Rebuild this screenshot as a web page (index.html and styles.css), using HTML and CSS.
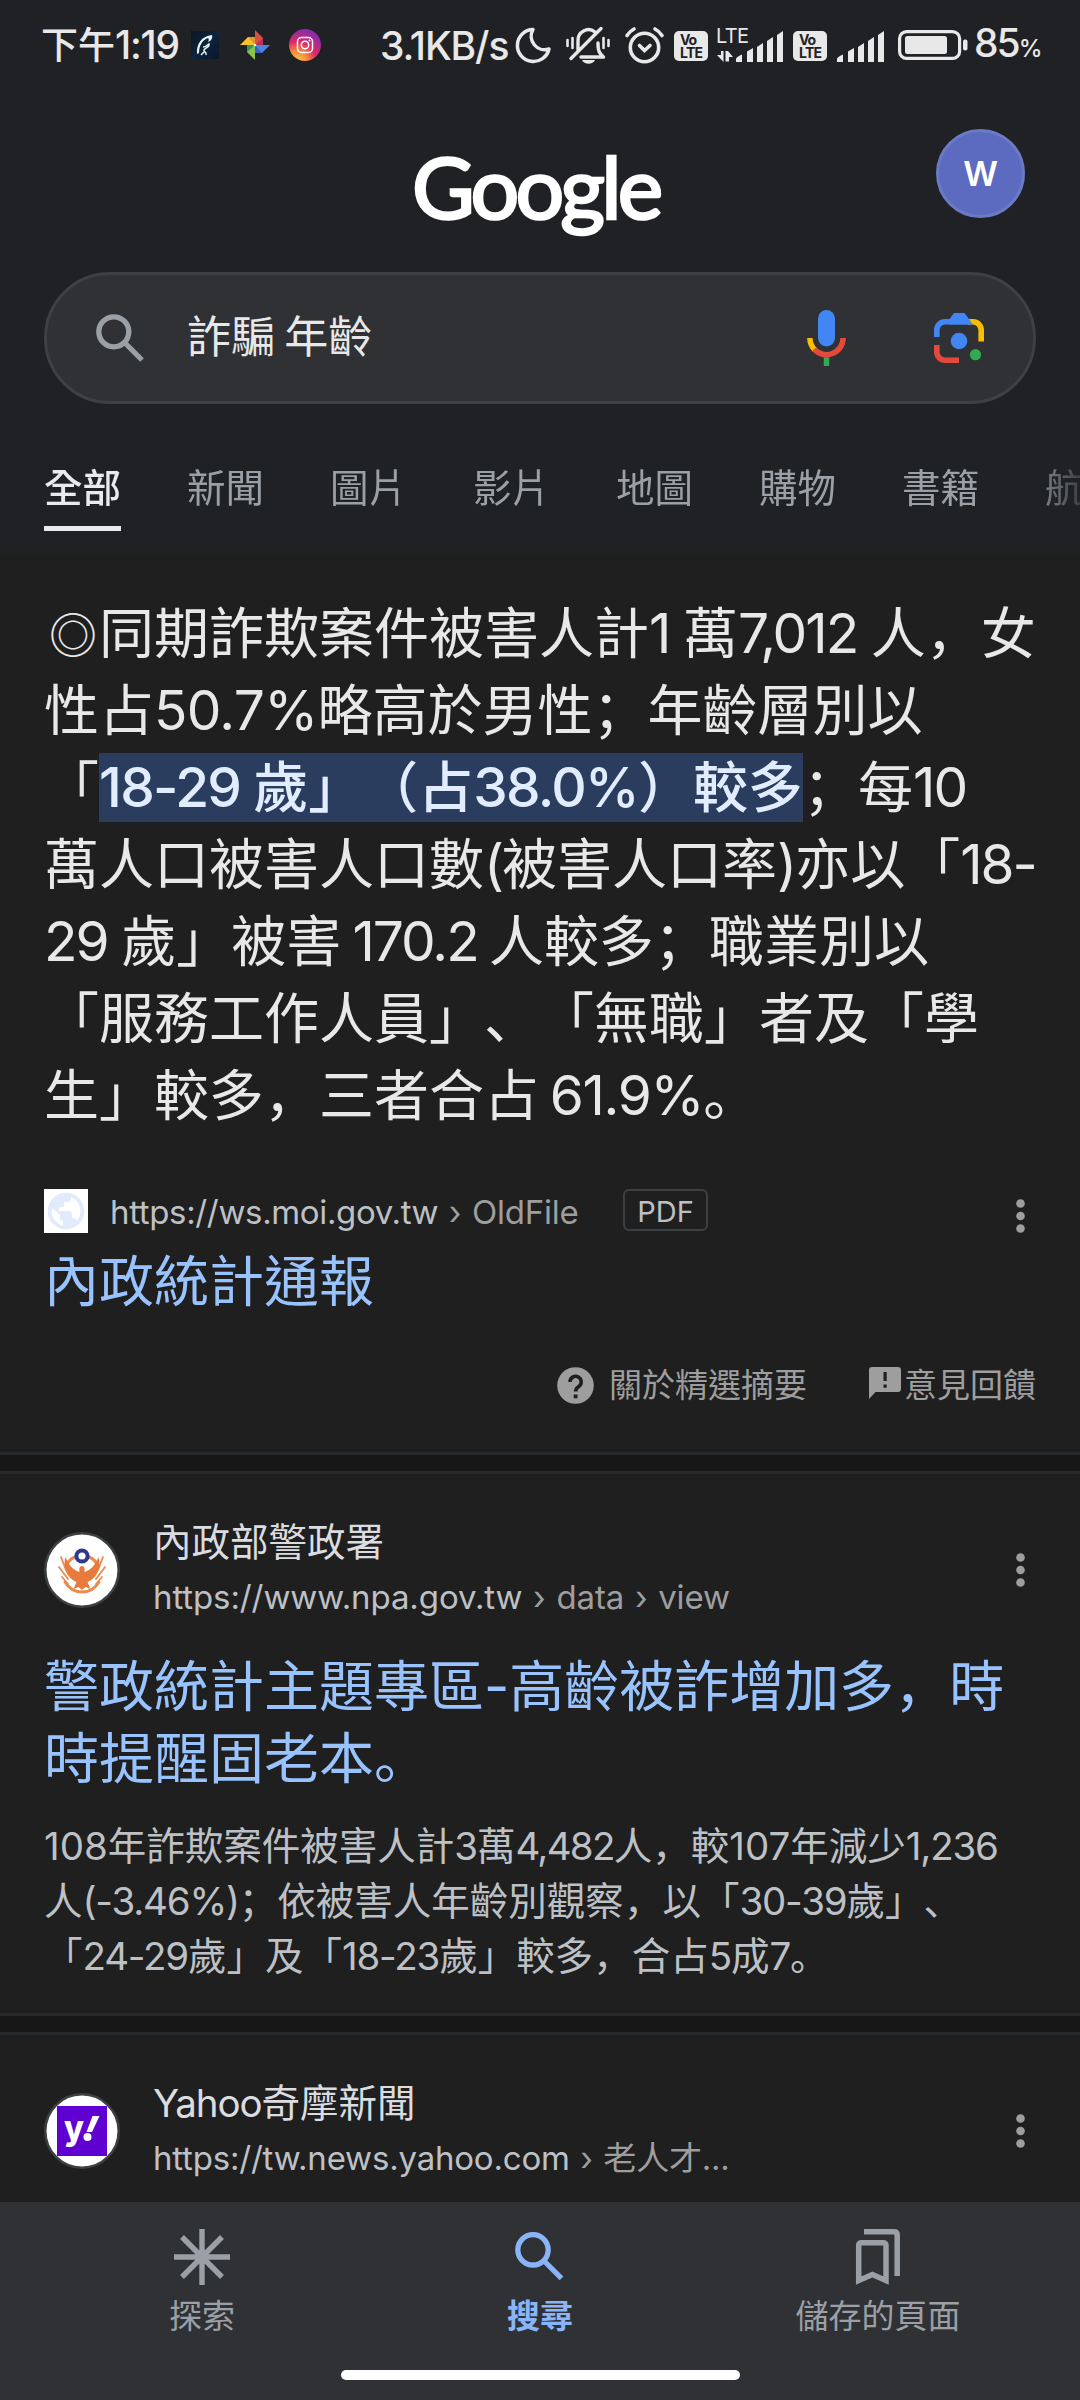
FILE: index.html
```html
<!DOCTYPE html>
<html lang="zh-Hant">
<head>
<meta charset="utf-8">
<title>詐騙 年齡 - Google</title>
<link rel="stylesheet" href="styles.css">
</head>
<body>
<div class="screen">
  <header class="header">
    <div class="status">
      <span class="time">下午<span class="clock">1:19</span></span>
      <svg width="28" height="28" viewBox="0 0 28 28"><defs><linearGradient id="sea" x1="0" y1="0" x2="1" y2="1"><stop offset="0" stop-color="#0a1420"/><stop offset=".5" stop-color="#0d2440"/><stop offset="1" stop-color="#0a1626"/></linearGradient></defs><rect width="28" height="28" fill="url(#sea)"/><path d="M6 23C5 14 10 5 21 4c1 3-1 6-4 7 1-2 1-3 0-4C11 9 8 15 8 22z" fill="#e8f3f4"/><path d="M12 16c3 0 4-2 6-3 1 3-4 4-5 6s3 1 2 5M10 24l3-3" stroke="#e8f3f4" stroke-width="1.500" fill="none"/></svg>
      <svg width="30" height="30" viewBox="0 0 30 30"><path d="M15 0v15h8V8z" fill="#d95040"/><path d="M15 15h8V8z" fill="#b8325a"/><path d="M30 15H15v8h7z" fill="#4a86ea"/><path d="M15 15v8h7z" fill="#3a62c4"/><path d="M15 30V15H7v7z" fill="#8bc34a"/><path d="M15 15H7v7z" fill="#2f9a50"/><path d="M0 15h15V7H8z" fill="#f6c12c"/><path d="M15 15V7H8z" fill="#e8962c"/><circle cx="15" cy="15" r="1.3" fill="#fff"/></svg>
      <svg width="32" height="32" viewBox="0 0 32 32"><defs><radialGradient id="ig" cx=".25" cy="1" r="1"><stop offset="0" stop-color="#ffc14a"/><stop offset=".3" stop-color="#f8923c"/><stop offset=".6" stop-color="#dd2a67"/><stop offset="1" stop-color="#8a2bab"/></radialGradient></defs><circle cx="16" cy="16" r="16" fill="url(#ig)"/><g fill="none" stroke="#fff" stroke-width="1.5"><rect x="8.5" y="8.5" width="15" height="15" rx="4"/><circle cx="16" cy="16" r="3.7"/></g><circle cx="20.5" cy="11.5" r="1" fill="#fff"/></svg>
      <span class="speed">3.1KB/s</span>
      <svg width="35" height="36" viewBox="0 0 35 36"><path d="M17 2.5A16 16 0 1 0 33 22 13.500 13.500 0 0 1 17 2.500z" fill="none" stroke="#e8e8e8" stroke-width="3.500" stroke-linejoin="round"/></svg>
      <svg width="44" height="39" viewBox="0 0 44 39"><g fill="none" stroke="#e8e8e8" stroke-width="3.400" stroke-linecap="round" stroke-linejoin="round"><path d="M12 24V15a10.500 10.500 0 0 1 17-9M32 17c0 8 1 10 5.500 14H15M5 32.500 35 2.500"/><path d="M1.500 14v6M6.500 12v10M37.500 12v10M42.500 14v6" stroke-width="2.600"/></g><path d="M16 34h13c-2 5-11 5-13 0z" fill="#e8e8e8"/></svg>
      <svg width="39" height="37" viewBox="0 0 39 37"><g fill="none" stroke="#e8e8e8" stroke-width="3.600" stroke-linecap="round"><circle cx="19.500" cy="20.500" r="14.200"/><path d="M2 8.500C4 5.500 6 3.500 9 2M37 8.500C35 5.500 33 3.500 30 2M14.500 18.500l5 5 5.500-5"/></g></svg>
      <svg class="low" width="34" height="30" viewBox="0 0 34 30"><rect width="34" height="30" rx="5" fill="#e8e8e8"/><g class="volte"><text x="6" y="13.500" textLength="17">Vo</text><text x="6" y="26.500" textLength="23">LTE</text></g></svg>
      <svg width="68" height="36" viewBox="0 0 68 36"><text class="lte" x="-1" y="15.500" textLength="33">LTE</text><path d="M0 28h4v-4h2.500v11zM8.500 24h2.500l5 6h-4v4.500H8.500z" fill="#e8e8e8"/><path d="M19 35v-3q0-2 6-4.500v7.500zM30 35V24.500l6-3.500v14zM40 35V20l6-4v19zM50 35V14l6-4v25zM60 35V8l6-4v31z" fill="#e8e8e8"/></svg>
      <svg class="low" width="34" height="30" viewBox="0 0 34 30"><rect width="34" height="30" rx="5" fill="#e8e8e8"/><g class="volte"><text x="6" y="13.500" textLength="17">Vo</text><text x="6" y="26.500" textLength="23">LTE</text></g></svg>
      <svg width="49" height="36" viewBox="18 0 49 36"><path d="M19 35v-3q0-2 6-4.500v7.500zM30 35V24.500l6-3.500v14zM40 35V20l6-4v19zM50 35V14l6-4v25zM60 35V8l6-4v31z" fill="#e8e8e8"/></svg>
      <svg width="70" height="30" viewBox="0 0 70 30"><rect x="1.600" y="1.600" width="60" height="26.800" rx="7" fill="none" stroke="#e8e8e8" stroke-width="3.200"/><rect x="7" y="6" width="42" height="18" rx="2.500" fill="#e8e8e8"/><rect x="65" y="9.500" width="4.500" height="11" rx="2" fill="#e8e8e8"/></svg>
      <span class="battery">85<small>%</small></span>
    </div>

    <div class="brand">
      <span class="logo">Google</span>
      <span class="account">W</span>
    </div>

    <div class="searchbar">
      <svg class="lookup" width="48" height="48" viewBox="0 0 48 48" fill="none" stroke="#9aa0a6" stroke-width="5.300"><circle cx="17.800" cy="17.800" r="15"/><path d="M28.500 28.500 46 46"/></svg>
      <span class="query">詐騙 年齡</span>
      <svg class="mic" width="39" height="56" viewBox="0 0 39 56"><rect x="11" width="17" height="36.500" rx="8.500" fill="#4285f4"/><g fill="none" stroke-width="5.500"><path d="M2.900 28A16.600 16.600 0 0 0 7.700 39.700" stroke="#fbbc04"/><path d="M7.200 39.200A16.600 16.600 0 0 0 36.100 28" stroke="#e34a3c"/><path d="M19.500 47.300V56" stroke="#34a853"/></g></svg>
      <svg width="50" height="50" viewBox="0 0 50 50"><g fill="none" stroke-width="5.600"><path d="M2.800 24V17A8.200 8.200 0 0 1 11 8.800H35" stroke="#4285f4"/><path d="M34 8.800h5A8.200 8.200 0 0 1 47.200 17V28.500" stroke="#fbbc04"/><path d="M2.800 32V39A8.200 8.200 0 0 0 11 47.200H25" stroke="#e34a3c"/></g><path d="M15.500 6 20 0H30.500L39 11.500H15.500z" fill="#4285f4"/><circle cx="25" cy="28" r="8.300" fill="#4285f4"/><circle cx="41.500" cy="41.700" r="5.600" fill="#34a853"/></svg>
    </div>

    <nav class="tabs">
      <span class="tab active">全部</span><span class="tab">新聞</span><span class="tab">圖片</span><span class="tab">影片</span><span class="tab">地圖</span><span class="tab">購物</span><span class="tab">書籍</span><span class="tab">航</span>
    </nav>
  </header>

  <section class="featured">
    <p class="answer">
      <span class="line"><i class="bullet">◎</i>同期詐欺案件被害人計<b>1 </b>萬<b>7,012 </b>人<i>，</i>女</span>
      <span class="line">性占<b class="loose">50.7%</b>略高於男性<i>；</i>年齡層別以</span>
      <span class="line">「<mark><b>18-29 </b>歲」（占<b>38.0%</b>）較多</mark><i>；</i>每<b>10</b></span>
      <span class="line">萬人口被害人口數<b>(</b>被害人口率<b>)</b>亦以「<b>18-</b></span>
      <span class="line"><b>29 </b>歲」被害<b class="snug"> 170.2 </b>人較多<i>；</i>職業別以</span>
      <span class="line">「服務工作人員」<i>、</i>「無職」者及「學</span>
      <span class="line">生」較多<i>，</i>三者合占<b class="share"> 61.9%</b><i>。</i></span>
    </p>
    <div class="source">
      <svg class="favicon" width="44" height="44" viewBox="0 0 44 44"><rect width="44" height="44" fill="#fff"/><circle cx="22" cy="22" r="18.300" fill="#e1ebfb"/><path d="M8 19 16 26v3q0 3 3 3v4.700A15 15 0 0 1 8 19zM27 8v1.500q0 3.500-3.500 3.500H20v3.500q0 1.800-1.800 1.800H15v3.700h11q1.800 0 1.800 1.800V29h2q2.500 0 3.300 2.500A15 15 0 0 0 27 8z" fill="#fff"/></svg>
      <span class="crumbs url"><em>https://ws.moi.gov.tw</em> › OldFile</span>
      <span class="badge">PDF</span>
      <svg class="more" width="9" height="34" viewBox="0 0 9 34"><circle cx="4.500" cy="4.500" r="4.300"/><circle cx="4.500" cy="17" r="4.300"/><circle cx="4.500" cy="29.500" r="4.300"/></svg>
    </div>
    <h3 class="title">內政統計通報</h3>
    <div class="feedback">
      <svg class="help" width="37" height="37" viewBox="0 0 37 37"><circle cx="18.500" cy="18.500" r="18.300" fill="#9e9e9e"/><path d="M13 15a5.600 5.600 0 1 1 8.500 4.700C19.500 21 18.600 22 18.600 24.500" fill="none" stroke="#1f1f1f" stroke-width="3.600"/><rect x="16.700" y="27.500" width="3.800" height="3.800" fill="#1f1f1f"/></svg>
      <span>關於精選摘要</span>
      <svg class="note" width="32" height="32" viewBox="0 0 32 32"><path d="M3 0H29a3 3 0 0 1 3 3V22a3 3 0 0 1-3 3H6.500L0 32V3A3 3 0 0 1 3 0z" fill="#9e9e9e"/><path d="M14.500 5h3.200v9h-3.200zM14.500 17.500h3.200v3.200h-3.200z" fill="#1f1f1f"/></svg>
      <span>意見回饋</span>
    </div>
  </section>

  <div class="divider"></div>

  <section class="result">
    <div class="site">
      <svg class="emblem" width="76" height="76" viewBox="0 0 76 76"><circle cx="38" cy="38" r="36.700" fill="#fff" stroke="#3c4043" stroke-width="2.500"/><g fill="none" stroke="#ea8a50" stroke-linecap="round"><path d="M31 25Q25 27 22 34M45 25Q51 27 54 34M21 50Q27 60 38 60T55 50" stroke-width="3"/><path d="M17 25 22 38M59 25 54 38M15 35 24 47M61 35 52 47M18 45 24 52M58 45 52 52" stroke-width="1.800"/></g><path d="M38 34c2.500 0 3 3 2.500 6 7-2 11-8 14-15 3 10-1 21-11 25l3 7-5-2-3.500 3-3.500-3-5 2 3-7C22.500 46 18.500 35 21.500 25c3 7 7 13 14 15-.5-3 0-6 2.500-6z" fill="#e87b3c"/><circle cx="38" cy="24" r="5.600" fill="#fff" stroke="#2b3a8f" stroke-width="4"/></svg>
      <div class="meta"><span class="name">內政部警政署</span><span class="url wide"><em>https://www.npa.gov.tw</em> › data › view</span></div>
      <svg class="more" width="9" height="34" viewBox="0 0 9 34"><circle cx="4.500" cy="4.500" r="4.300"/><circle cx="4.500" cy="17" r="4.300"/><circle cx="4.500" cy="29.500" r="4.300"/></svg>
    </div>
    <h3 class="title"><span class="line">警政統計主題專區-高齡被詐增加多<i>，</i>時</span><span class="line">時提醒固老本<i>。</i></span></h3>
    <p class="snippet">
      <span class="line"><b class="loose">108</b>年詐欺案件被害人計<b>3</b>萬<b class="tight">4,482</b>人<i>，</i>較<b class="loose">107</b>年減少<b>1,236</b></span>
      <span class="line">人<b>(-3.46%)</b><i>；</i>依被害人年齡別觀察<i>，</i>以「<b>30-39</b>歲」<i>、</i></span>
      <span class="line">「<b>24-29</b>歲」及「<b>18-23</b>歲」較多<i>，</i>合占<b>5</b>成<b>7</b><i>。</i></span>
    </p>
  </section>

  <div class="divider"></div>

  <section class="result last">
    <div class="site">
      <svg class="emblem" width="76" height="76" viewBox="0 0 76 76"><circle cx="38" cy="38" r="36.700" fill="#fff" stroke="#3c4043" stroke-width="2.500"/><rect x="13" y="13" width="50" height="50" fill="#5f01d1"/><text class="yahoo" x="20" y="47" textLength="20" lengthAdjust="spacingAndGlyphs">y</text><path d="M48.500 23H55.500L48 39H42.500z" fill="#fff"/><circle cx="43.500" cy="44" r="4" fill="#fff"/></svg>
      <div class="meta"><span class="name"><b>Yahoo</b>奇摩新聞</span><span class="url"><em>https://tw.news.yahoo.com</em> › 老人才...</span></div>
      <svg class="more" width="9" height="34" viewBox="0 0 9 34"><circle cx="4.500" cy="4.500" r="4.300"/><circle cx="4.500" cy="17" r="4.300"/><circle cx="4.500" cy="29.500" r="4.300"/></svg>
    </div>
  </section>

  <footer class="dock">
    <div class="dock-items">
      <div class="dock-item"><svg width="56" height="56" viewBox="0 0 56 56" stroke="#9aa0a6" stroke-width="5.400"><path d="M28 0V56M0 28H56M8 8 48 48M48 8 8 48"/></svg><span>探索</span></div>
      <div class="dock-item current"><svg width="56" height="56" viewBox="0 0 56 56" fill="none" stroke="#8ab4f8" stroke-width="5.300"><circle cx="21" cy="20.800" r="15.200"/><path d="M31.700 31.500 49.500 49.300"/></svg><span>搜尋</span></div>
      <div class="dock-item"><svg width="44" height="56" viewBox="0 0 44 56" fill="none" stroke="#9aa0a6" stroke-width="5.500"><path d="M2.700 51.500V16.500Q2.700 13.700 5.500 13.700H27Q30 13.700 30 16.500V51.500L16.400 45.500z"/><path d="M8 2.800H38Q41.200 2.800 41.200 6V47"/></svg><span>儲存的頁面</span></div>
    </div>
    <div class="homebar"></div>
  </footer>
</div>
</body>
</html>
```
FILE: styles.css
```css
* { box-sizing: border-box; margin: 0; padding: 0; }
body {
  background: #1f1f1f;
  font-family: Inter, "Noto Sans CJK TC", sans-serif;
  color: #e8e8e8;
  text-spacing-trim: space-all;
}
svg { display: block; flex: none; overflow: visible; }
b, em, i { font-weight: inherit; font-style: normal; }
/* Punctuation sits in the lower left of its cell */
i { font-family: Inter, "Noto Sans CJK SC", sans-serif; -webkit-locale: "zh-Hans"; }
.screen { width: 1080px; height: 2400px; overflow: hidden; display: flex; flex-direction: column; }

.header { height: 553px; flex: none; background: #202124; display: flex; flex-direction: column; }
.status {
  height: 90px; padding-left: 41px; display: grid; align-items: center; white-space: nowrap;
  grid-template-columns: 150px 49px 49px 91px 136px 50px 59px 49px 43px 76px 43px 62px 76px auto;
  font-size: 37px; font-weight: 500; line-height: 50px;
}
.clock { font-size: 39px; letter-spacing: -1.2px; }
.speed, .battery { font-size: 39px; letter-spacing: -1.1px; padding-top: 2px; }
.battery { letter-spacing: -2px; }
.battery small { font-size: 24px; letter-spacing: 0; }
.low { margin-top: 2px; }
.volte text { font: 700 14px Inter, sans-serif; fill: #202124; }
.lte { font: 400 20px Inter, sans-serif; fill: #e8e8e8; }

.brand { height: 182px; padding: 39px 55px 0 412px; display: flex; justify-content: space-between; align-items: flex-start; }
.logo { font: 400 86px/120px Lato, sans-serif; -webkit-text-stroke: 2.6px #fff; letter-spacing: -3.8px; color: #fff; margin-top: -3px; }
.account {
  width: 89px; height: 89px; border-radius: 50%; background: #5c6bc0; border: 3px solid #6b7ac4;
  color: #fff; font: 600 34px/83px Inter, sans-serif; text-align: center;
}
.searchbar {
  height: 132px; margin: 0 44px; padding: 0 49px; border: 3px solid #3f4044; border-radius: 66px;
  background: #303134; display: flex; align-items: center;
}
.query { flex: 1; font-size: 44px; line-height: 60px; margin: 0 0 3px 43px; word-spacing: -3px; }
.mic { margin-right: 88px; }
.tabs {
  height: 149px; padding: 51px 0 18px 44px; display: flex; gap: 66px; overflow: hidden; white-space: nowrap;
  color: #9aa0a6; font-size: 38.5px; line-height: 66px;
  -webkit-mask-image: linear-gradient(90deg, #000 1025px, rgba(0, 0, 0, .25) 1080px);
}
.tab { flex: none; }
.tab.active { height: 76px; color: #e8eaed; font-weight: 500; border-bottom: 5px solid #e8eaed; }

.line { display: block; white-space: pre; }
.featured { height: 899px; flex: none; padding: 42px 44px 0; }
.answer { font-size: 55px; line-height: 77px; }
.answer .line { height: 77px; }
.answer b { letter-spacing: -2px; }
.answer b.loose { letter-spacing: -.7px; }
.answer b.snug { word-spacing: -2.2px; }
.answer b.share { letter-spacing: -1.3px; word-spacing: -3.5px; }
.bullet { font-size: 48px; line-height: 1; padding-left: 5px; letter-spacing: 2px; }
mark { background: #2a3d5e; color: #e1ecff; font-weight: 500; padding: 1px 0 2px; }
.answer mark b { letter-spacing: -1.7px; }
.source { height: 44px; margin-top: 55px; display: flex; align-items: center; }
.crumbs { margin: 2px 0 0 22px; width: 513px; }
.url { font-size: 33px; line-height: 44px; color: #9e9e9e; white-space: nowrap; letter-spacing: -.2px; word-spacing: 1.5px; }
.url em { color: #bdc1c6; }
.crumbs em { letter-spacing: -.35px; }
.wide { letter-spacing: -.1px; }
.badge {
  width: 85px; height: 42px; border: 2px solid #3c4043; border-radius: 6px; text-align: center;
  font-size: 29px; line-height: 41px; color: #bdc1c6; margin-top: -3px;
}
.more { fill: #9e9e9e; margin-left: auto; margin-right: 11px; }
.source .more { margin-top: 10px; }
.title { font-size: 55px; font-weight: 400; line-height: 72px; color: #99c3ff; margin-top: 12px; }
.feedback { margin-top: 46px; display: flex; justify-content: flex-end; color: #9e9e9e; font-size: 33px; line-height: 44px; }
.help { margin: 4px 15px 0 0; }
.note { margin: 4px 3px 0 62px; }

.divider { height: 22px; flex: none; background: #171717; border: solid #262a2c; border-width: 3px 0; }
.result { height: 539px; flex: none; padding: 40px 44px 0; }
.result.last { height: 167px; overflow: hidden; }
.site { height: 112px; display: flex; align-items: center; }
.emblem { margin-top: -1px; }
.meta { margin-left: 33px; display: flex; flex-direction: column; }
.name { font-size: 38.5px; line-height: 56px; color: #dadce0; }
.name b { letter-spacing: -1.1px; }
.meta .url { line-height: 54px; margin-bottom: 2px; }
.result .title { margin-top: 24px; }
.snippet { margin-top: 25px; font-size: 38.5px; line-height: 55px; color: #bdc1c6; }
.snippet b { letter-spacing: -1.2px; }
.snippet b.tight { letter-spacing: -1.7px; }
.snippet b.loose { letter-spacing: 0; }
.yahoo { font: 800 34px Inter, sans-serif; fill: #fff; }

.dock { height: 198px; flex: none; background: #303134; color: #9aa0a6; }
.dock-items { padding: 27px 33px 0; display: flex; height: 168px; }
.dock-item { flex: 1; display: flex; flex-direction: column; align-items: center; font-size: 33px; line-height: 44px; gap: 9px; }
.current { color: #8ab4f8; font-weight: 700; }
.homebar { width: 399px; height: 10px; border-radius: 5px; background: #fff; margin: 0 auto; }
```
